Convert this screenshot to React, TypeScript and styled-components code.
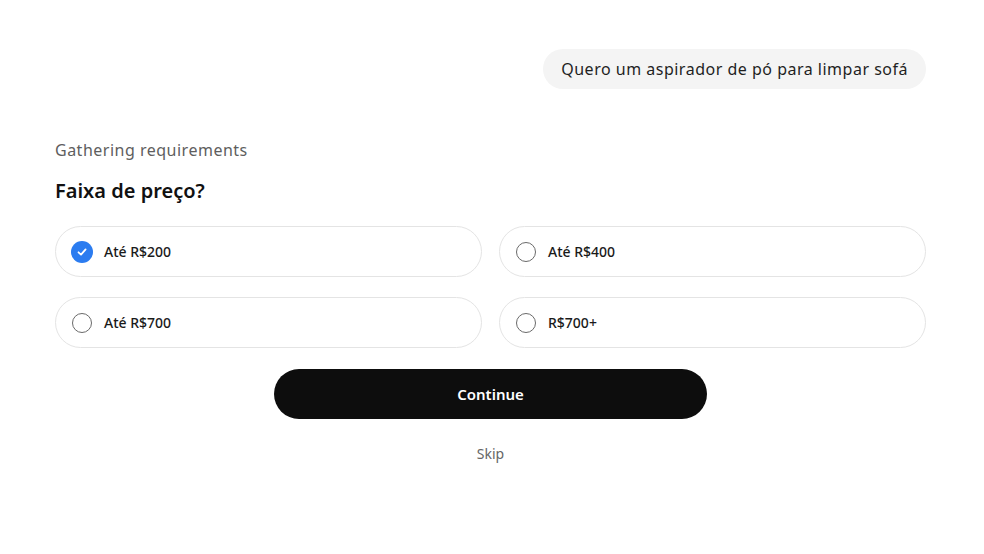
import styled, { createGlobalStyle } from 'styled-components';

const GlobalStyle = createGlobalStyle`
  body {
    margin: 0;
    background: #ffffff;
    font-family: "Segoe UI", "Noto Sans", "Open Sans", sans-serif;
    color: #1a1a1a;
  }
`;

const options = [
  { id: 'a', label: 'Até R$200', checked: true },
  { id: 'b', label: 'Até R$400', checked: false },
  { id: 'c', label: 'Até R$700', checked: false },
  { id: 'd', label: 'R$700+', checked: false },
];

const Page = styled.div`
  display: flex;
  flex-direction: column;
  padding: 49px 58px 0 55px;
`;

const BubbleRow = styled.div`
  display: flex;
  justify-content: flex-end;
`;

const Bubble = styled.div`
  background: #f4f4f4;
  border-radius: 20px;
  height: 40px;
  padding: 0 18px;
  display: flex;
  align-items: center;
  font-size: 16px;
  letter-spacing: 0.5px;
  color: #1f1f1f;
`;

const Status = styled.div`
  margin-top: 50px;
  font-size: 16px;
  line-height: 22px;
  letter-spacing: 0.5px;
  color: #5e5e5e;
`;

const Question = styled.h2`
  margin: 16px 0 0;
  font-size: 20px;
  line-height: 28px;
  font-weight: 600;
  color: #111;
`;

const OptionGrid = styled.div`
  margin-top: 21px;
  display: grid;
  grid-template-columns: 1fr 1fr;
  column-gap: 17px;
  row-gap: 20px;
`;

const Option = styled.label`
  height: 51px;
  box-sizing: border-box;
  border: 1px solid #e4e4e4;
  border-radius: 26px;
  display: flex;
  align-items: center;
  gap: 11px;
  padding-left: 15px;
  font-size: 14px;
  font-weight: 500;
  color: #1a1a1a;
  cursor: pointer;
`;

const Mark = styled.span<{ $checked: boolean }>`
  width: 22px;
  height: 22px;
  flex: none;
  display: flex;
  align-items: center;
  justify-content: center;
  box-sizing: border-box;
  border-radius: 50%;
  background: ${(p) => (p.$checked ? '#2b7cf0' : 'transparent')};
  border: ${(p) => (p.$checked ? 'none' : '1.5px solid #6a6a6a')};
  ${(p) => (p.$checked ? '' : 'width: 20px; height: 20px; margin: 0 1px;')}
`;

const Actions = styled.div`
  margin-top: 21px;
  display: flex;
  flex-direction: column;
  align-items: center;
`;

const ContinueButton = styled.button`
  width: 433px;
  height: 50px;
  border: none;
  border-radius: 25px;
  background: #0d0d0d;
  color: #fff;
  font-family: inherit;
  font-size: 15px;
  font-weight: 600;
  cursor: pointer;
`;

const SkipButton = styled.button`
  margin-top: 25px;
  border: none;
  background: none;
  padding: 0;
  font-family: inherit;
  font-size: 14px;
  line-height: 20px;
  color: #666;
  cursor: pointer;
`;

const Check = () => (
  <svg width="12" height="12" viewBox="0 0 12 12">
    <polyline points="2.5 6.3 5 8.6 9.6 3.4" fill="none" stroke="#fff" strokeWidth="1.8" strokeLinecap="round" strokeLinejoin="round" />
  </svg>
);

export default function App() {
  return (
    <>
      <GlobalStyle />
      <Page>
        <BubbleRow>
          <Bubble>Quero um aspirador de pó para limpar sofá</Bubble>
        </BubbleRow>
        <Status>Gathering requirements</Status>
        <Question>Faixa de preço?</Question>
        <OptionGrid>
          {options.map((o) => (
            <Option key={o.id}>
              <Mark $checked={o.checked}>{o.checked && <Check />}</Mark>
              {o.label}
            </Option>
          ))}
        </OptionGrid>
        <Actions>
          <ContinueButton>Continue</ContinueButton>
          <SkipButton>Skip</SkipButton>
        </Actions>
      </Page>
    </>
  );
}
